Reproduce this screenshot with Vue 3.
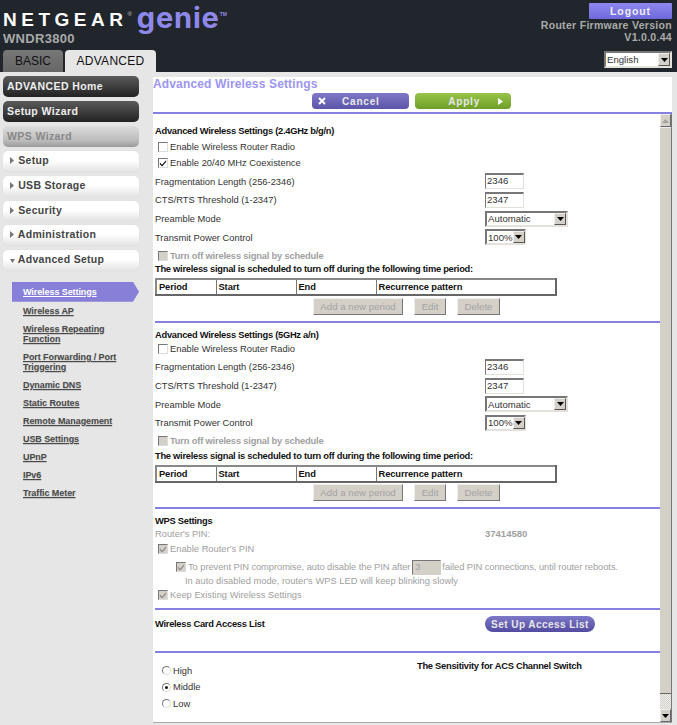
<script setup>
const nav = [
  { label: 'ADVANCED Home', kind: 'dark' },
  { label: 'Setup Wizard', kind: 'dark' },
  { label: 'WPS Wizard', kind: 'muted' },
  { label: 'Setup', kind: 'light', arrow: 'right' },
  { label: 'USB Storage', kind: 'light', arrow: 'right' },
  { label: 'Security', kind: 'light', arrow: 'right' },
  { label: 'Administration', kind: 'light', arrow: 'right' },
  { label: 'Advanced Setup', kind: 'light', arrow: 'down' }
]
const links = [
  'Wireless AP',
  'Wireless Repeating Function',
  'Port Forwarding / Port Triggering',
  'Dynamic DNS',
  'Static Routes',
  'Remote Management',
  'USB Settings',
  'UPnP',
  'IPv6',
  'Traffic Meter'
]
const sections = [
  { title: 'Advanced Wireless Settings (2.4GHz b/g/n)', coexist: true },
  { title: 'Advanced Wireless Settings (5GHz a/n)', coexist: false }
]
</script>

<template>
  <div class="app">
    <header class="top">
      <div class="brand">
        <div class="logo">
          <span class="netgear">NETGEAR</span><sup class="reg">®</sup>
          <span class="genie">genie</span><sup class="tm">TM</sup>
        </div>
        <div class="model">WNDR3800</div>
        <div class="tabs">
          <span class="tab basic">BASIC</span>
          <span class="tab adv">ADVANCED</span>
        </div>
      </div>
      <div class="meta">
        <button class="logout">Logout</button>
        <div class="fw">Router Firmware Version<br />V1.0.0.44</div>
        <div class="sel lang"><span>English</span><i class="arrowbtn"><svg width="7" height="4" viewBox="0 0 7 4"><path d="M0 0h7L3.500 4z" /></svg></i></div>
      </div>
    </header>

    <div class="main">
      <aside class="side">
        <a v-for="n in nav" :key="n.label" class="nav" :class="n.kind">
          <svg v-if="n.arrow === 'right'" class="tri tri-r" width="4" height="7" viewBox="0 0 4 7"><path d="M0 0l4 3.500L0 7z" /></svg>
          <svg v-if="n.arrow === 'down'" class="tri" width="5" height="4" viewBox="0 0 5 4"><path d="M0 0h5L2.500 4z" /></svg>
          {{ n.label }}
        </a>
        <nav class="sub">
          <a class="current">Wireless Settings</a>
          <a v-for="l in links" :key="l" class="link">{{ l }}</a>
        </nav>
      </aside>

      <section class="panel">
        <h1 class="title">Advanced Wireless Settings</h1>
        <div class="actions">
          <button class="btn cancel"><svg width="8" height="8" viewBox="0 0 8 8"><path d="M1 1l6 6M7 1L1 7" stroke="#fff" stroke-width="2" /></svg><span>Cancel</span></button>
          <button class="btn apply"><span>Apply</span><svg width="5" height="7" viewBox="0 0 5 7"><path d="M0 0l5 3.500L0 7z" fill="#fff" /></svg></button>
        </div>

        <div class="frame">
          <div class="form">
            <template v-for="(s, i) in sections" :key="s.title">
              <div class="block" :class="{ second: i === 1 }">
                <div class="head">{{ s.title }}</div>
                <label class="chk"><span class="cb"></span>Enable Wireless Router Radio</label>
                <label v-if="s.coexist" class="chk"><span class="cb"><svg width="8" height="8" viewBox="0 0 9 9"><path d="M1 4l2.500 2.500L8 1.500v2L3.500 8.500L1 6z" /></svg></span>Enable 20/40 MHz Coexistence</label>
                <div class="field"><span>Fragmentation Length (256-2346)</span><span class="txt">2346</span></div>
                <div class="field"><span>CTS/RTS Threshold (1-2347)</span><span class="txt">2347</span></div>
                <div class="field"><span>Preamble Mode</span><div class="sel auto"><span>Automatic</span><i class="arrowbtn"><svg width="7" height="4" viewBox="0 0 7 4"><path d="M0 0h7L3.500 4z" /></svg></i></div></div>
                <div class="field"><span>Transmit Power Control</span><div class="sel pct"><span>100%</span><i class="arrowbtn"><svg width="7" height="4" viewBox="0 0 7 4"><path d="M0 0h7L3.500 4z" /></svg></i></div></div>
                <label class="chk dim bold"><span class="cb dis"></span>Turn off wireless signal by schedule</label>
                <div class="head small">The wireless signal is scheduled to turn off during the following time period:</div>
                <table class="sched">
                  <tbody>
                    <tr><th class="c1">Period</th><th class="c2">Start</th><th class="c3">End</th><th>Recurrence pattern</th></tr>
                  </tbody>
                </table>
                <div class="tools">
                  <button class="ctl wide">Add a new period</button>
                  <button class="ctl edit">Edit</button>
                  <button class="ctl del">Delete</button>
                </div>
              </div>
            </template>

            <div class="block wps">
              <div class="head">WPS Settings</div>
              <div class="pin dim"><span>Router's PIN:</span><b>37414580</b></div>
              <label class="chk dim"><span class="cb dis"><svg width="8" height="8" viewBox="0 0 9 9"><path d="M1 4l2.500 2.500L8 1.500v2L3.500 8.500L1 6z" /></svg></span>Enable Router's PIN</label>
              <label class="chk dim indent"><span class="cb dis"><svg width="8" height="8" viewBox="0 0 9 9"><path d="M1 4l2.500 2.500L8 1.500v2L3.500 8.500L1 6z" /></svg></span>To prevent PIN compromise, auto disable the PIN after<span class="numbox">3</span>failed PIN connections, until router reboots.</label>
              <div class="note dim">In auto disabled mode, router's WPS LED will keep blinking slowly</div>
              <label class="chk dim"><span class="cb dis"><svg width="8" height="8" viewBox="0 0 9 9"><path d="M1 4l2.500 2.500L8 1.500v2L3.500 8.500L1 6z" /></svg></span>Keep Existing Wireless Settings</label>
            </div>

            <div class="block access">
              <div class="head">Wireless Card Access List</div>
              <button class="btn setup">Set Up Access List</button>
            </div>

            <div class="acs">
              <div class="radios">
                <label class="rad"><span class="rb"></span>High</label>
                <label class="rad"><span class="rb sel-rb"></span>Middle</label>
                <label class="rad"><span class="rb"></span>Low</label>
              </div>
              <div class="head acs-head">The Sensitivity for ACS Channel Switch</div>
            </div>
          </div>

          <div class="scroll" aria-hidden="true">
            <i class="sbtn"><svg width="7" height="4" viewBox="0 0 7 4"><path d="M0 4h7L3.500 0z" fill="#a5a29a" /></svg></i>
            <i class="thumb"></i>
            <i class="track"></i>
            <i class="sbtn"><svg width="7" height="4" viewBox="0 0 7 4"><path d="M0 0h7L3.500 4z" /></svg></i>
          </div>
        </div>
      </section>
    </div>
  </div>
</template>

<style>
html, body { margin: 0; padding: 0; background: #e6e6e6; }
</style>

<style scoped>
.app {
  width: 677px;
  height: 725px;
  display: flex;
  flex-direction: column;
  overflow: hidden;
  background: #e6e6e6;
  font-family: "Liberation Sans", Arial, sans-serif;
  font-size: 9.33px;
  color: #333;
}
button { font-family: inherit; padding: 0; cursor: default; }

/* header */
.top {
  height: 72px;
  flex: none;
  display: flex;
  justify-content: space-between;
  background: #20262b;
  padding-right: 5px;
}
.brand { display: flex; flex-direction: column; padding-left: 3px; }
.logo { height: 32px; display: flex; align-items: flex-start; white-space: nowrap; }
.netgear {
  font-weight: 700;
  font-size: 19px;
  letter-spacing: 4.5px;
  color: #fff;
  line-height: 19px;
  margin-top: 10px;
}
.reg { color: #ccc; font-size: 6px; line-height: 6px; margin: 11px 0 0 0; }
.genie {
  font-family: Inter, sans-serif;
  font-weight: 700;
  font-size: 29px;
  line-height: normal;
  color: #8e88ea;
  margin: 0 0 0 5px;
  letter-spacing: .8px;
}
.tm { color: #8e88ea; font-size: 5px; font-weight: 700; line-height: 5px; margin: 12px 0 0 0; }
.model { font-weight: 700; font-size: 13px; line-height: 13px; color: #a9a9a9; letter-spacing: .3px; }
.tabs { margin-top: auto; display: flex; gap: 2px; }
.tab {
  height: 22px;
  line-height: 23px;
  text-align: center;
  border-radius: 4px 4px 0 0;
  font-size: 12px;
  color: #111;
}
.basic { width: 60px; background: linear-gradient(#777, #666); }
.adv { width: 91px; background: #e6e6e6; letter-spacing: .3px; }

.meta { display: flex; flex-direction: column; align-items: flex-end; padding-top: 3px; }
.logout {
  width: 83px;
  height: 16px;
  border: 0;
  border-radius: 1px;
  background: linear-gradient(#8f88f0, #6f68dc);
  color: #eee;
  font-weight: 700;
  font-size: 10.5px;
  letter-spacing: .9px;
}
.fw {
  color: #aaa;
  font-weight: 700;
  font-size: 10.5px;
  line-height: 12px;
  letter-spacing: .3px;
  text-align: right;
}
.lang { margin-top: 8px; width: 68px; height: 17px; }

/* selects */
.sel {
  display: flex;
  align-items: center;
  justify-content: space-between;
  box-sizing: border-box;
  background: #fff;
  border: 2px solid;
  border-color: #777 #e4e1da #e4e1da #777;
  font-size: 9.6px;
  color: #333;
  padding-left: 1px;
}
.arrowbtn {
  width: 12px;
  height: 100%;
  display: flex;
  align-items: center;
  justify-content: center;
  background: #d4d0c8;
  border: 1px solid;
  border-color: #eee #555 #555 #eee;
  box-sizing: border-box;
  flex: none;
}
.auto { width: 83px; height: 16px; }
.pct { width: 41px; height: 16px; }

/* body */
.main { flex: 1; min-height: 0; display: flex; }
.side { width: 153px; flex: none; display: flex; flex-direction: column; gap: 4px; padding: 4px 14px 0 3px; box-sizing: border-box; }
.nav {
  height: 21px;
  line-height: 20px;
  border-radius: 5px;
  font-weight: 700;
  font-size: 10.5px;
  letter-spacing: .4px;
  padding-left: 4px;
  box-sizing: border-box;
  white-space: nowrap;
}
.nav.dark { background: linear-gradient(#5b5b5b, #333 70%, #222); color: #eee; }
.nav.muted { background: linear-gradient(#ddd, #bbb 70%, #999); color: #888; }
.nav.light {
  height: 20.750px;
  line-height: 19px;
  background: linear-gradient(#fff, #fff 45%, #e2e2e2);
  color: #444;
  padding-left: 7px;
  letter-spacing: .3px;
  box-shadow: 0 0 1px #ccc;
}
.tri { fill: #777; }
.tri-r { margin-right: 1px; }
.sub { display: flex; flex-direction: column; padding-top: 7px; }
.sub a {
  font-weight: 700;
  font-size: 9px;
  line-height: 10px;
  text-decoration: underline;
  color: #4a4a4a;
  letter-spacing: -.08px;
  text-shadow: 0 1px 1px #c4c4c4;
}
.sub a.current {
  margin-left: 9px;
  height: 20px;
  line-height: 20px;
  padding-left: 11px;
  background: #8880d8;
  color: #fff;
  text-shadow: none;
  clip-path: polygon(0 0, 121px 0, 100% 50%, 121px 100%, 0 100%);
  margin-bottom: 4px;
}
.link { margin: 0 10px 8px 20px; }

.panel {
  flex: 1;
  min-width: 0;
  margin: 5px 5px 2px 0;
  background: #fff;
  display: flex;
  flex-direction: column;
}
.title {
  margin: 0;
  font-size: 12px;
  font-weight: 700;
  line-height: 14px;
  letter-spacing: .15px;
  color: #9c95f2;
}
.actions { height: 17px; margin-top: 2px; padding-left: 159px; display: flex; gap: 6px; }
.btn {
  border: 0;
  height: 16px;
  color: #e8e8e8;
  font-weight: 700;
  font-size: 10px;
  letter-spacing: .8px;
  display: flex;
  align-items: center;
}
.cancel { width: 97px; border-radius: 4px; background: linear-gradient(#7e78c8, #5c55a8); padding-left: 6px; gap: 16px; }
.apply { width: 96px; border-radius: 4px; background: linear-gradient(#98c44a, #6e9f28); justify-content: flex-end; padding-right: 8px; gap: 18px; }
.frame {
  flex: 1;
  min-height: 0;
  margin-top: 2px;
  border-top: 2px solid #8880e0;
  border-bottom: 1px solid #aaa;
  display: flex;
}
.form { flex: 1; min-width: 0; padding: 10px 0 0 2px; }
.second, .wps, .access {
  border-top: 2px solid #8880e0;
  margin-top: 6px;
  padding-top: 5px;
}
.head { font-weight: 700; font-size: 9.33px; line-height: 15px; color: #111; letter-spacing: -.27px; white-space: nowrap; }
.second > .head:first-child { margin-bottom: -2px; }
.chk {
  display: flex;
  align-items: center;
  height: 16px;
  padding-left: 3px;
  white-space: nowrap;
}
.chk + .field { margin-top: 1px; }
.chk.bold { font-weight: 700; letter-spacing: -.18px; padding-top: 1px; }
.dim { color: #a0a0a0; }
.cb {
  width: 8px;
  height: 8px;
  margin-right: 2px;
  flex: none;
  background: #fff;
  border: 1px solid;
  border-color: #777 #ddd #ddd #777;
  display: flex;
  box-sizing: content-box;
}
.cb svg { fill: #111; }
.cb.dis { background: #d4d0c8; }
.cb.dis svg { fill: #888; }
.field {
  display: grid;
  grid-template-columns: 330px auto;
  align-items: center;
  height: 18.670px;
}
.field > span:first-child { padding-top: 1px; }
.txt {
  width: 39px;
  height: 16px;
  box-sizing: border-box;
  border: 1px solid;
  border-color: #777 #e4e1da #e4e1da #777;
  border-width: 2px 1px 1px 1px;
  padding-left: 1px;
  font-size: 9.600px;
  line-height: 12px;
}
.head.small { line-height: 12px; margin-top: -1px; }
.second .head.small { margin-top: 1px; }
.sched {
  width: 402px;
  margin: 3px 0 2px 0;
  border-collapse: collapse;
  border: 2px solid;
  border-color: #888 #666 #666 #888;
  table-layout: fixed;
}
.second .sched { margin-bottom: 1px; }
.sched th {
  height: 16px;
  padding: 0 0 0 2px;
  text-align: left;
  font-size: 9.330px;
  letter-spacing: -.1px;
  color: #111;
  border: 1px solid #777;
  box-sizing: border-box;
}
.c1 { width: 60px; }
.c2 { width: 80px; }
.c3 { width: 80px; }
.tools { display: flex; gap: 11px; padding-left: 158px; }
.ctl {
  height: 17px;
  border: 1px solid;
  border-color: #eee #777 #777 #eee;
  background: #d4d0c8;
  color: #a3a3a3;
  font-size: 9.700px;
}
.wide { width: 90px; }
.edit { width: 32px; }
.del { width: 43px; }

.wps { padding-top: 6px; }
.wps .head { line-height: 13px; }
.pin { display: grid; grid-template-columns: 330px auto; height: 13px; margin-top: -1px; padding-bottom: 1px; align-items: center; }
.pin b { font-size: 9.500px; }
.indent { padding-left: 21px; height: 20px; letter-spacing: -.06px; }
.numbox {
  width: 29px;
  height: 15px;
  box-sizing: border-box;
  margin: 0 1px 0 2px;
  background: #d4d0c8;
  border: 1px solid;
  border-color: #777 #d4d0c8 #d4d0c8 #777;
  line-height: 12px;
  padding-left: 2px;
}
.note { padding-left: 30px; height: 12px; line-height: 8px; margin-bottom: -2px; }

.access { display: grid; grid-template-columns: 330px auto; height: 35px; margin-top: 5px; padding-top: 6px; align-items: start; }
.access .head { margin-top: 1px; }
.setup {
  width: 110px;
  border-radius: 8px;
  justify-content: center;
  background: linear-gradient(#7e78c8, #524ba0);
  font-size: 10px;
  letter-spacing: .45px;
}
.acs {
  border-top: 2px solid #8880e0;
  padding-top: 5px;
  display: grid;
  grid-template-columns: 262px auto;
}
.acs-head { padding-top: 1px; }
.radios { display: flex; flex-direction: column; padding: 4px 0 0 7px; }
.rad { display: flex; align-items: center; height: 16.500px; gap: 2px; }
.rb {
  width: 7px;
  height: 7px;
  border-radius: 50%;
  border: 1px solid;
  border-color: #777 #ddd #ddd #777;
  background: #fff;
  box-sizing: content-box;
  display: flex;
  align-items: center;
  justify-content: center;
}
.sel-rb::after { content: ""; width: 3px; height: 3px; border-radius: 50%; background: #111; }

.scroll { width: 12px; flex: none; display: flex; flex-direction: column; background: #d4d0c8; border-right: 1px solid #777; box-sizing: border-box; }
.sbtn {
  height: 13px;
  flex: none;
  display: flex;
  align-items: center;
  justify-content: center;
  background: #d4d0c8;
  border: 1px solid;
  border-color: #eee #666 #666 #eee;
  box-sizing: border-box;
}
.thumb { flex: 1; background: #d4d0c8; border-bottom: 1px solid #666; border-top: 1px solid #eee; }
.track {
  height: 15px;
  flex: none;
  background: repeating-conic-gradient(#eee 0 25%, #d4d0c8 0 50%) 0 0 / 2px 2px;
}
</style>
